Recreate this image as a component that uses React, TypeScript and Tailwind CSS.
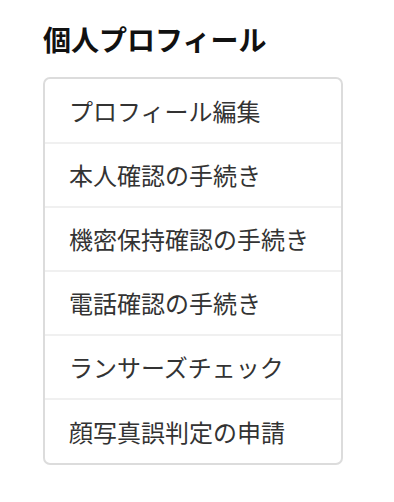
import React from "react";

const items = [
  "プロフィール編集",
  "本人確認の手続き",
  "機密保持確認の手続き",
  "電話確認の手続き",
  "ランサーズチェック",
  "顔写真誤判定の申請",
];

export default function App() {
  return (
    <div
      className="w-[394px] h-[502px] bg-white pl-[43px] pt-[19px]"
      style={{ fontFamily: '"Noto Sans CJK JP", "Noto Sans", sans-serif' }}
    >
      <h1 className="text-[28px] leading-[40px] font-bold text-[#111]">個人プロフィール</h1>
      <ul className="mt-[18px] w-[300px] border-2 border-[#dcdcdc] rounded-[7px] bg-white">
        {items.map((t, i) => (
          <li
            key={t}
            className={
              i === 0
                ? "h-[63px] flex items-center pl-[24px] text-[24px] text-[#333]"
                : i === items.length - 1
                ? "h-[65px] flex items-center pl-[24px] text-[24px] text-[#333] border-t-2 border-[#f0f0f0]"
                : "h-[64px] flex items-center pl-[24px] text-[24px] text-[#333] border-t-2 border-[#f0f0f0]"
            }
          >
            {t}
          </li>
        ))}
      </ul>
    </div>
  );
}
